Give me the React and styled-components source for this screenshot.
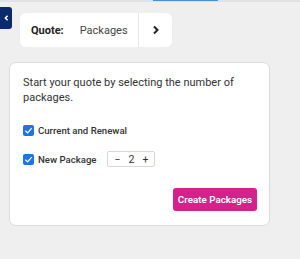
import React from "react";
import styled, { createGlobalStyle } from "styled-components";

const Global = createGlobalStyle`
  html, body { margin: 0; padding: 0; background: #efefef; }
  body { font-family: Roboto, "Noto Sans", Arial, sans-serif; color: #333; }
  * { box-sizing: border-box; }
`;

const Page = styled.div`
  width: 300px;
  height: 259px;
  background: #efefef;
  overflow: hidden;
`;

const TopLine = styled.div`
  height: 2px;
  background: #e2e2e2;
  display: flex;
`;

const TopAccent = styled.div`
  margin-left: 153px;
  width: 65px;
  height: 1px;
  background: #4a90d9;
`;

const Header = styled.div`
  display: flex;
  align-items: flex-start;
`;

const SideTab = styled.button`
  margin-top: 5px;
  width: 12px;
  height: 22px;
  border: none;
  padding: 0;
  background: #0b2a6e;
  border-radius: 0 3px 3px 0;
  display: flex;
  align-items: center;
  justify-content: center;
`;

const Crumb = styled.div`
  margin-top: 11px;
  margin-left: 8px;
  width: 152px;
  height: 34px;
  background: #fff;
  border-radius: 6px;
  display: flex;
  align-items: center;
`;

const CrumbLabel = styled.span`
  font-weight: 700;
  font-size: 11px;
  color: #222;
  margin-left: 11px;
`;

const CrumbValue = styled.span`
  font-size: 11px;
  color: #444;
  margin-left: 16px;
`;

const CrumbNext = styled.div`
  margin-left: auto;
  width: 34px;
  height: 100%;
  border-left: 1px solid #e6e6e6;
  display: flex;
  align-items: center;
  justify-content: center;
`;

const Card = styled.div`
  margin: 15px 0 0 9px;
  width: 261px;
  height: 164px;
  background: #fff;
  border: 1px solid #dcdcdc;
  border-radius: 7px;
  padding: 12px 12px 0 13px;
  display: flex;
  flex-direction: column;
`;

const Intro = styled.p`
  margin: 0;
  font-size: 11px;
  line-height: 15px;
  color: #333;
`;

const Row = styled.div`
  display: flex;
  align-items: center;
  margin-top: ${(p) => p.$mt}px;
`;

const Check = styled.span`
  width: 11px;
  height: 11px;
  border-radius: 2px;
  background: #1f74e0;
  display: flex;
  align-items: center;
  justify-content: center;
`;

const Label = styled.span`
  font-size: 9.6px;
  font-weight: 500;
  color: #333;
  margin-left: 4px;
`;

const Stepper = styled.div`
  margin-left: 11px;
  width: 48px;
  height: 16px;
  border: 1px solid #d8d8d8;
  border-radius: 2px;
  display: flex;
  align-items: center;
  justify-content: space-around;
  padding: 0 2px;
  font-size: 10.5px;
  color: #333;
`;

const Footer = styled.div`
  display: flex;
  justify-content: flex-end;
  margin-top: 21px;
`;

const Button = styled.button`
  height: 23px;
  width: 84px;
  padding: 0;
  border: none;
  border-radius: 3px;
  background: #d6218d;
  color: #fff;
  font-family: Roboto, Arial, sans-serif;
  font-weight: 600;
  font-size: 9.8px;
`;

const Tick = () => (
  <svg width="9" height="9" viewBox="0 0 10 10">
    <path d="M1.5 5.2 L4 7.6 L8.6 2.4" fill="none" stroke="#fff" strokeWidth="1.4" />
  </svg>
);

export default function App() {
  return (
    <Page>
      <Global />
      <TopLine>
        <TopAccent />
      </TopLine>
      <Header>
        <SideTab aria-label="collapse">
          <svg width="5" height="6" viewBox="0 0 5 6">
            <path d="M3.6 0.8 L1.4 3 L3.6 5.2" fill="none" stroke="#fff" strokeWidth="1.5" />
          </svg>
        </SideTab>
        <Crumb>
          <CrumbLabel>Quote:</CrumbLabel>
          <CrumbValue>Packages</CrumbValue>
          <CrumbNext>
            <svg width="8" height="10" viewBox="0 0 8 10">
              <path d="M2 1.5 L5.5 5 L2 8.5" fill="none" stroke="#222" strokeWidth="2" />
            </svg>
          </CrumbNext>
        </Crumb>
      </Header>
      <Card>
        <Intro>Start your quote by selecting the number of packages.</Intro>
        <Row $mt={20}>
          <Check><Tick /></Check>
          <Label>Current and Renewal</Label>
        </Row>
        <Row $mt={15}>
          <Check><Tick /></Check>
          <Label>New Package</Label>
          <Stepper>
            <span>−</span>
            <span>2</span>
            <span>+</span>
          </Stepper>
        </Row>
        <Footer>
          <Button>Create Packages</Button>
        </Footer>
      </Card>
    </Page>
  );
}
